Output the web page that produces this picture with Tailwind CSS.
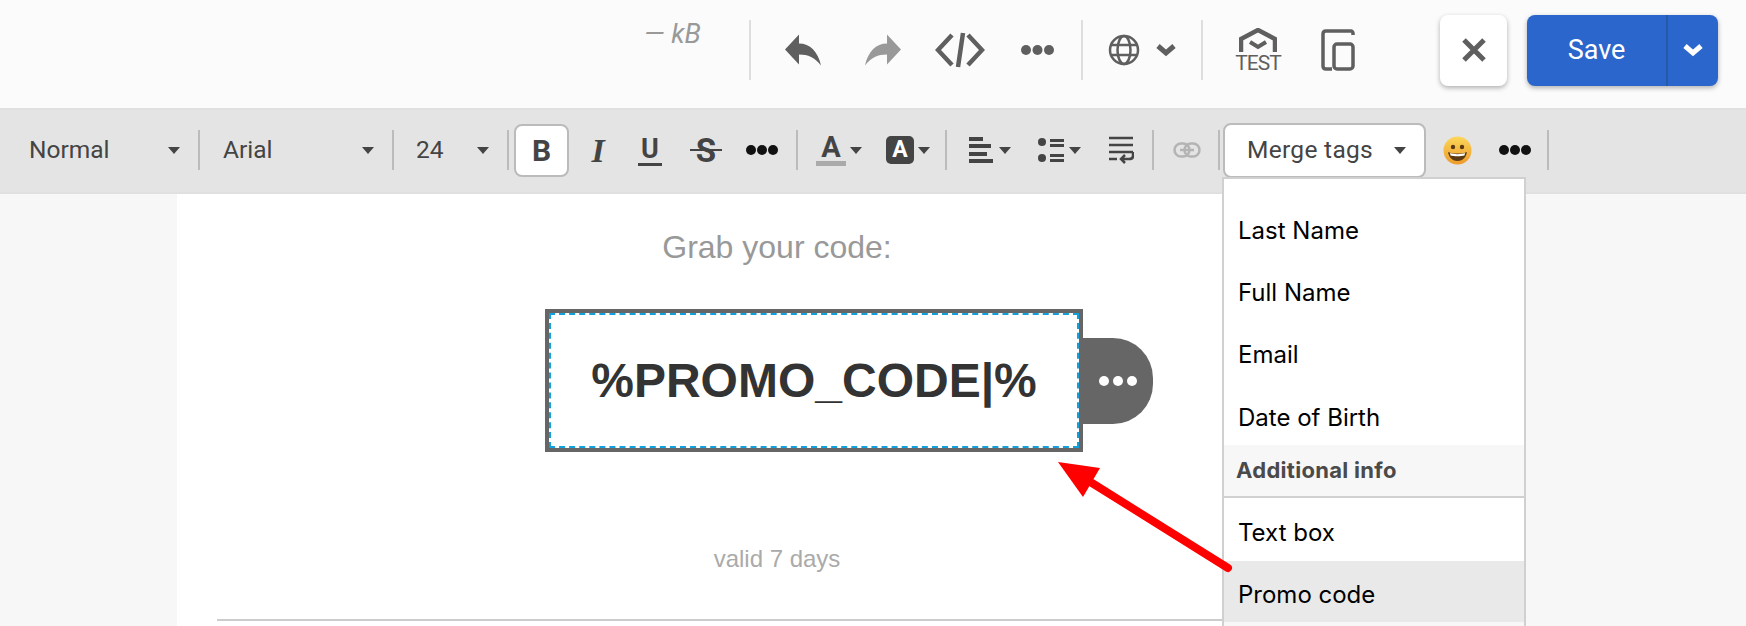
<!DOCTYPE html>
<html lang="en">

<head>
    <meta charset="UTF-8">
    <title>Email editor</title>
    <script src="https://cdn.jsdelivr.net/npm/@tailwindcss/browser@4"></script>
</head>

<body class="w-[1746px] h-[626px] overflow-hidden relative bg-[#f7f7f7] font-['Roboto',sans-serif]">
    <!-- Top bar -->
    <header class="h-[110px] bg-[#fbfbfb] border-b-2 border-[#e0e0e0] flex items-center relative pb-[8px]">
        <span class="ml-[644px] w-[105px] -mt-[32px] italic text-[27px] text-[#999]">— kB</span>
        <div class="w-[2px] h-[60px] bg-[#dedede]"></div>
        <svg class="ml-[34px] w-[36px] h-[32px] text-[#5f5f5f]" viewBox="0 0 36 31" fill="currentColor"><path d="M0 15 14 0V9C25 9 33 17 36 31 30 23 23 20 14 20V30Z" /></svg>
        <svg class="ml-[44px] w-[36px] h-[32px] text-[#999]" viewBox="0 0 36 31" fill="currentColor"><path d="M36 15 22 0V9C11 9 3 17 0 31 6 23 13 20 22 20V30Z" /></svg>
        <svg class="ml-[34px] w-[50px] h-[36px] text-[#5f5f5f]" viewBox="0 0 50 36" fill="none" stroke="currentColor" stroke-width="4.5"><path d="M17 3 3 18 17 33M33 3 47 18 33 33M28 1 23 35" /></svg>
        <svg class="ml-[36px] w-[33px] h-[12px] text-[#5f5f5f]" viewBox="0 0 33 12" fill="currentColor"><circle cx="5" cy="6" r="5" /><circle cx="16.500" cy="6" r="5" /><circle cx="28" cy="6" r="5" /></svg>
        <div class="ml-[27px] w-[2px] h-[60px] bg-[#dedede]"></div>
        <svg class="ml-[25px] w-[32px] h-[32px] text-[#5f5f5f]" viewBox="0 0 32 32" fill="none" stroke="currentColor" stroke-width="2.500"><circle cx="16" cy="16" r="14" /><ellipse cx="16" cy="16" rx="6.500" ry="14" /><path d="M3 11H29M3 21H29" /></svg>
        <svg class="ml-[16px] w-[20px] h-[14px] text-[#5f5f5f]" viewBox="0 0 20 14" fill="none" stroke="currentColor" stroke-width="5"><path d="M2 3 10 10 18 3" /></svg>
        <div class="ml-[25px] w-[2px] h-[60px] bg-[#dedede]"></div>
        <div class="ml-[34px] w-[42px] h-[44px] flex flex-col items-center text-[#5f5f5f]">
            <svg class="w-[38px] h-[26px]" viewBox="0 0 38 26" fill="none" stroke="currentColor"><path d="M2 24V11L19 2 36 11V24" stroke-width="4.500" /><path d="M11 14 19 19 27 14" stroke-width="4" /></svg>
            <span class="text-[21px] leading-[18px] tracking-[-1px]">TEST</span>
        </div>
        <svg class="ml-[42px] w-[34px] h-[42px] text-[#5f5f5f]" viewBox="0 0 34 42" fill="none" stroke="currentColor" stroke-width="3.500"><path d="M32 6V4C32 3 31 2 30 2H5C3 2 2 3 2 5V37C2 39 3 40 5 40H11" /><rect x="13" y="15" width="19" height="25" rx="3" /></svg>
        <button class="ml-[85px] w-[67px] h-[71px] bg-white rounded-[8px] shadow-[0_2px_5px_rgba(0,0,0,0.3)] flex items-center justify-center">
            <svg class="w-[24px] h-[24px] text-[#5f5f5f]" viewBox="0 0 24 24" fill="none" stroke="currentColor" stroke-width="5"><path d="M2 2 22 22M22 2 2 22" /></svg>
        </button>
        <div class="ml-[20px] w-[191px] h-[71px] bg-[#2a66cc] rounded-[8px] shadow-[0_2px_5px_rgba(0,0,0,0.3)] flex text-white">
            <span class="w-[139px] flex items-center justify-center text-[27px]">Save</span>
            <div class="w-[2px] bg-[#245aa8]"></div>
            <div class="flex-1 flex items-center justify-center">
                <svg class="w-[20px] h-[14px]" viewBox="0 0 20 14" fill="none" stroke="currentColor" stroke-width="5"><path d="M2 3 10 10 18 3" /></svg>
            </div>
        </div>
    </header>

    <!-- Format toolbar -->
    <div class="h-[84px] bg-[#e4e4e4] border-b-2 border-[#e0e0e0] flex items-center text-[24.500px] text-[#444] pb-[2px]">
        <div class="w-[198px] pl-[29px] pr-[18px] flex items-center justify-between">Normal<span class="w-0 h-0 border-x-[6px] border-x-transparent border-t-[7px] border-t-[#444]"></span></div>
        <div class="w-[2px] h-[40px] bg-[#bbb]"></div>
        <div class="w-[192px] pl-[23px] pr-[18px] flex items-center justify-between">Arial<span class="w-0 h-0 border-x-[6px] border-x-transparent border-t-[7px] border-t-[#444]"></span></div>
        <div class="w-[2px] h-[40px] bg-[#bbb]"></div>
        <div class="w-[113px] pl-[22px] pr-[18px] flex items-center justify-between">24<span class="w-0 h-0 border-x-[6px] border-x-transparent border-t-[7px] border-t-[#444]"></span></div>
        <div class="w-[2px] h-[40px] bg-[#bbb]"></div>
        <button class="ml-[5px] w-[55px] h-[53px] bg-white border-2 border-[#bbb] rounded-[8px] font-bold text-[30px]">B</button>
        <span class="ml-[19px] w-[20px] text-center font-bold italic text-[34px] font-['Liberation_Serif',serif]">I</span>
        <span class="ml-[30px] w-[24px] text-center font-bold text-[27px] border-b-[3px] border-[#444] leading-[28px]">U</span>
        <span class="relative ml-[30px] w-[28px] text-center font-bold text-[33px] leading-[33px]">S<span class="absolute -left-[2px] -right-[2px] top-[15px] h-[2px] bg-[#444]"></span></span>
        <svg class="ml-[26px] w-[32px] h-[12px] text-[#111]" viewBox="0 0 32 12" fill="currentColor"><circle cx="5" cy="6" r="5" /><circle cx="16" cy="6" r="5" /><circle cx="27" cy="6" r="5" /></svg>
        <div class="ml-[18px] w-[2px] h-[40px] bg-[#bbb]"></div>
        <div class="ml-[18px] w-[30px] flex flex-col items-center font-bold text-[29px] leading-[27px]">A<div class="w-[30px] h-[5px] bg-[#aaa]"></div></div>
        <span class="ml-[4px] w-0 h-0 border-x-[6px] border-x-transparent border-t-[7px] border-t-[#444]"></span>
        <div class="ml-[24px] w-[28px] h-[28px] rounded-[5px] bg-[#444] text-white font-bold text-[23px] flex items-center justify-center">A</div>
        <span class="ml-[4px] w-0 h-0 border-x-[6px] border-x-transparent border-t-[7px] border-t-[#444]"></span>
        <div class="ml-[15px] w-[2px] h-[40px] bg-[#bbb]"></div>
        <svg class="ml-[22px] w-[24px] h-[26px] text-[#444]" viewBox="0 0 24 26" fill="currentColor"><rect width="14" height="4" /><rect y="7" width="22" height="4" /><rect y="15" width="18" height="4" /><rect y="22" width="24" height="4" /></svg>
        <span class="ml-[6px] w-0 h-0 border-x-[6px] border-x-transparent border-t-[7px] border-t-[#444]"></span>
        <svg class="ml-[27px] w-[26px] h-[26px] text-[#444]" viewBox="0 0 26 26" fill="currentColor"><circle cx="4" cy="5" r="4" /><circle cx="4" cy="21" r="4" /><rect x="12" y="2" width="14" height="3" /><rect x="12" y="7" width="14" height="3" /><rect x="12" y="17" width="14" height="3" /><rect x="12" y="22" width="14" height="3" /></svg>
        <span class="ml-[5px] w-0 h-0 border-x-[6px] border-x-transparent border-t-[7px] border-t-[#444]"></span>
        <svg class="ml-[28px] w-[25px] h-[28px] text-[#444]" viewBox="0 0 25 28" fill="none" stroke="currentColor" stroke-width="2.500"><path d="M0 2H24M0 9H24M0 16H24M0 23H8" /><path d="M24 16V20C24 22 22 23 20 23H13M16 19 12 23 16 27" /></svg>
        <div class="ml-[18px] w-[2px] h-[40px] bg-[#bbb]"></div>
        <svg class="ml-[19px] w-[28px] h-[16px] text-[#b4b4b4]" viewBox="0 0 28 16" fill="none" stroke="currentColor" stroke-width="2.500"><rect x="1.500" y="1.500" width="15" height="13" rx="6.500" /><rect x="11.500" y="1.500" width="15" height="13" rx="6.500" /><path d="M7 8H21" /></svg>
        <div class="ml-[17px] w-[2px] h-[40px] bg-[#bbb]"></div>
        <div class="ml-[3px] w-[203px] h-[55px] bg-white border-2 border-[#bbb] rounded-[8px] flex items-center justify-between pl-[22px] pr-[18px]">
            <span class="tracking-[0.3px]">Merge tags</span><span class="w-0 h-0 border-x-[6px] border-x-transparent border-t-[7px] border-t-[#444]"></span>
        </div>
        <svg class="ml-[17px] w-[29px] h-[29px]" viewBox="0 0 29 29">
            <defs><linearGradient id="emoji" x1="0" y1="0" x2="0" y2="1"><stop offset="0" stop-color="#fbd75a" /><stop offset="1" stop-color="#ee9a2a" /></linearGradient></defs>
            <circle cx="14.500" cy="14.500" r="14" fill="url(#emoji)" /><circle cx="10" cy="11" r="2.200" fill="#5a3a10" /><circle cx="19" cy="11" r="2.200" fill="#5a3a10" /><path d="M5 16C10 18 19 18 24 16 23 22 19 25 14.500 25 10 25 6 22 5 16Z" fill="#5a3a10" /><path d="M7 17C11 18.500 18 18.500 22 17L21.500 19.500C18 20.500 11 20.500 7.500 19.500Z" fill="#fff" />
        </svg>
        <svg class="ml-[27px] w-[32px] h-[12px] text-[#111]" viewBox="0 0 32 12" fill="currentColor"><circle cx="5" cy="6" r="5" /><circle cx="16" cy="6" r="5" /><circle cx="27" cy="6" r="5" /></svg>
        <div class="ml-[16px] w-[2px] h-[40px] bg-[#bbb]"></div>
    </div>

    <!-- Canvas card -->
    <main class="ml-[177px] w-[1200px] h-[432px] bg-white flex flex-col items-center font-['Liberation_Sans',sans-serif]">
        <p class="mt-[35px] text-[32px] leading-[36px] text-[#999]">Grab your code:</p>
        <div class="mt-[44px] ml-[144px] flex items-center">
            <div class="w-[538px] h-[143px] border-[4px] border-[#666] bg-white p-0 flex">
                <div class="flex-1 border-2 border-dashed border-[#12a0dc] flex items-center justify-center font-bold text-[48px] text-[#333]">%PROMO_CODE|%</div>
            </div>
            <div class="w-[70px] h-[86px] bg-[#666] rounded-r-[40px] flex items-center justify-center gap-[4px]">
                <span class="w-[10px] h-[10px] rounded-full bg-white"></span><span class="w-[10px] h-[10px] rounded-full bg-white"></span><span class="w-[10px] h-[10px] rounded-full bg-white"></span>
            </div>
        </div>
        <p class="mt-[92px] text-[24px] leading-[30px] text-[#aaa]">valid 7 days</p>
        <div class="mt-[45px] w-[1120px] h-[2px] bg-[#ccc]"></div>
    </main>

    <!-- Merge tags menu -->
    <div class="absolute left-[1222px] top-[177px] w-[304px] h-[449px] bg-white border-2 border-[#d0d0d0] border-b-0 font-['Inter',sans-serif] text-[24px] text-black">
        <div class="mt-[21px] h-[62px] pl-[14px] flex items-center">Last Name</div>
        <div class="h-[62px] pl-[14px] flex items-center">Full Name</div>
        <div class="h-[62px] pl-[14px] flex items-center">Email</div>
        <div class="h-[59px] pt-[4px] pl-[14px] flex items-center">Date of Birth</div>
        <div class="h-[53px] bg-[#f7f7f7] border-b-2 border-[#d0d0d0] pl-[12px] flex items-center font-bold text-[22px] tracking-[0.3px] text-[#4a4a4a]">Additional info</div>
        <div class="h-[63px] pt-[6px] pl-[14px] flex items-center">Text box</div>
        <div class="h-[61px] pt-[6px] pl-[14px] flex items-center bg-[#e9e9e9]">Promo code</div>
        <div class="h-[4px] bg-[#f7f7f7]"></div>
    </div>

    <!-- Red annotation arrow -->
    <svg class="absolute left-0 top-0 w-[1746px] h-[626px] pointer-events-none" viewBox="0 0 1746 626">
        <path d="M1228 568 1092 483" stroke="#ff0000" stroke-width="8" stroke-linecap="round" />
        <path d="M1058 462 1100 468 1083 497Z" fill="#ff0000" />
    </svg>
</body>

</html>
